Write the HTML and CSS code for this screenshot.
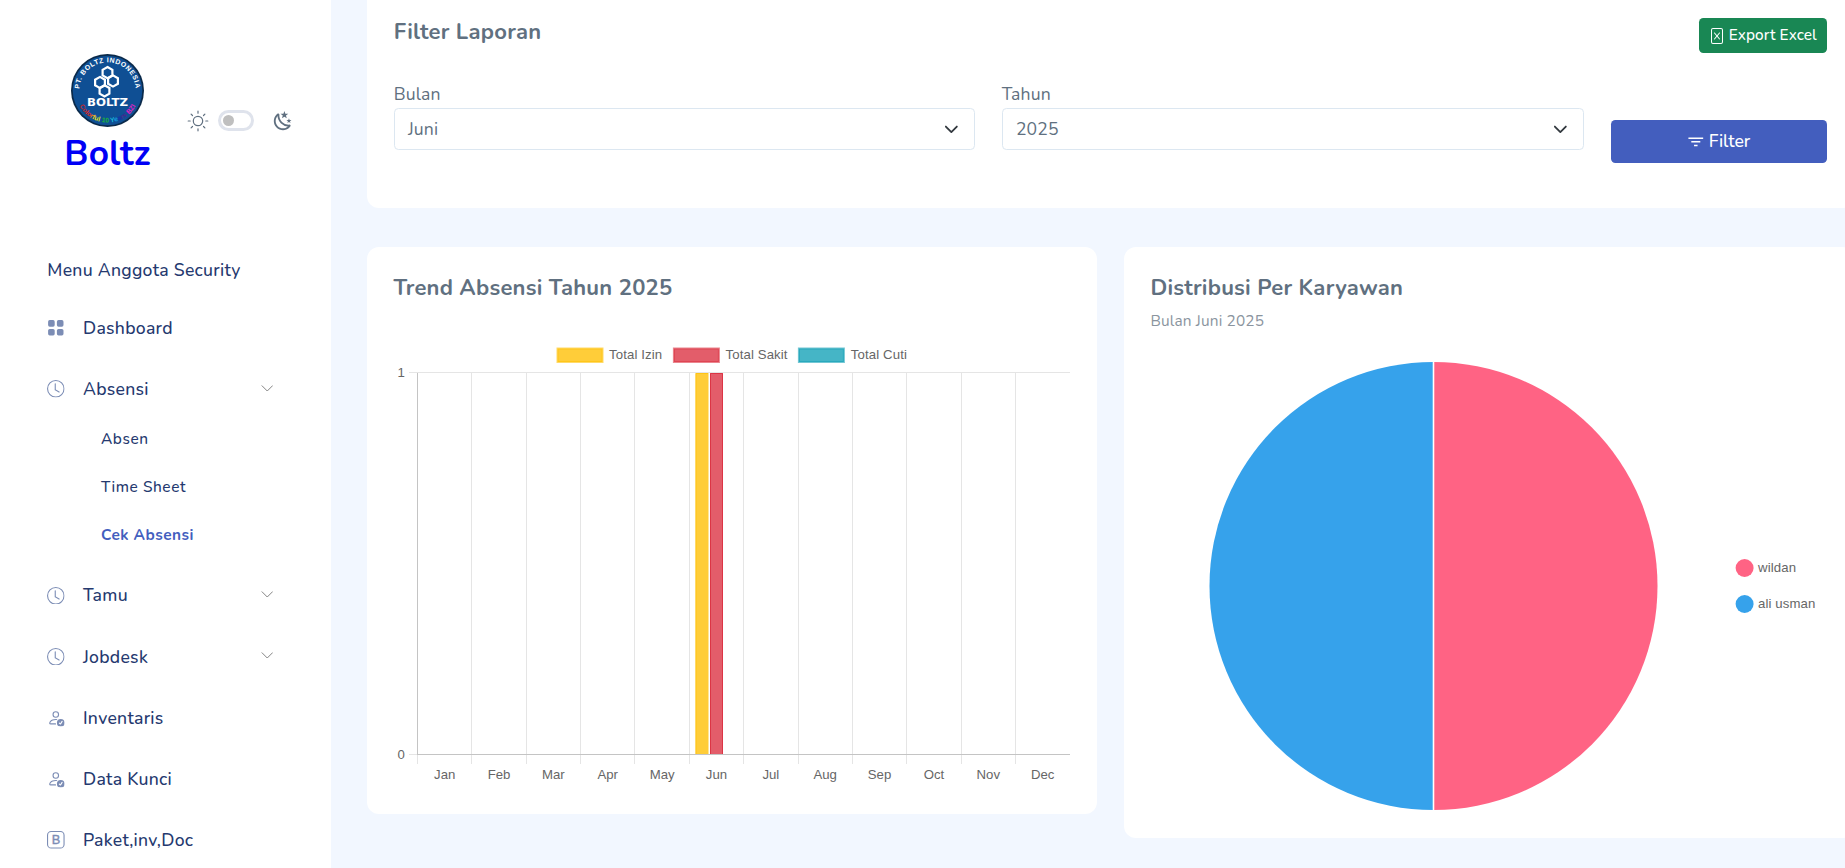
FILE: index.html
```html
<!DOCTYPE html>
<html lang="id">
<head>
<meta charset="utf-8">
<title>Cek Absensi</title>
<link rel="stylesheet" href="styles.css">
</head>
<body>
<svg class="defs" aria-hidden="true">
  <symbol id="clock" viewBox="0 0 16 16"><path d="M8 3.500a.5.5 0 0 0-1 0V9a.5.5 0 0 0 .252.434l3.500 2a.5.5 0 0 0 .496-.868L8 8.710z"/><path d="M8 16A8 8 0 1 0 8 0a8 8 0 0 0 0 16m7-8A7 7 0 1 1 1 8a7 7 0 0 1 14 0"/></symbol>
  <symbol id="person" viewBox="0 0 16 16"><path d="M12.500 16a3.500 3.500 0 1 0 0-7 3.500 3.500 0 0 0 0 7m1.679-4.493-1.335 2.226a.75.75 0 0 1-1.174.144l-.774-.773a.5.5 0 0 1 .708-.708l.547.548 1.170-1.951a.5.5 0 1 1 .858.514M11 5a3 3 0 1 1-6 0 3 3 0 0 1 6 0M8 7a2 2 0 1 0 0-4 2 2 0 0 0 0 4"/><path d="M8.256 14a4.474 4.474 0 0 1-.229-1.004H3c.001-.246.154-.986.832-1.664C4.484 10.680 5.711 10 8 10c.26 0 .507.009.74.025.226-.341.496-.65.804-.918C9.077 9.038 8.564 9 8 9c-5 0-6 3-6 4s1 1 1 1z"/></symbol>
  <symbol id="caret" viewBox="0 0 12 7"><path d="M.5.5 6 6 11.500.5" fill="none" stroke="currentColor"/></symbol>
  <symbol id="select-caret" viewBox="0 0 16 16"><path d="m2 5 6 6 6-6" fill="none" stroke="#343a40" stroke-width="2" stroke-linecap="round" stroke-linejoin="round"/></symbol>
</svg>

<div class="app">
  <aside class="sidebar">
    <header class="brand-row">
      <a class="brand">
        <svg class="logo" viewBox="-36.500 -36.500 73 73">
          <defs>
            <path id="arc-top" d="M-27.200 7.500A28.200 28.200 0 1 1 27.200 7.500"/>
            <path id="arc-bottom" d="M-31.400 7A32.200 32.200 0 0 0 31.400 7"/>
          </defs>
          <circle r="36.500" fill="#0b2a4a"/>
          <circle r="34.800" fill="#0f4f94"/>
          <g fill="none" stroke="#fff" stroke-width="2.200">
            <path d="M0-23.500l4.900 2.800v5.600L0-12.300l-4.900-2.800v-5.600z"/>
            <path d="M-7.500-13.600l4.900 2.800v5.600l-4.900 2.800-4.900-2.800v-5.600z"/>
            <path d="M5.500-15.100l4.900 2.800v5.600L5.500-3.900.6-6.700v-5.600z"/>
            <path d="M-3-5.300l4.900 2.800v5.600L-3 5.900l-4.900-2.800v-5.600z"/>
          </g>
          <text class="logo-name" x="0" y="15.500" textLength="41" lengthAdjust="spacingAndGlyphs">BOLTZ</text>
          <text class="logo-arc logo-arc-top"><textPath href="#arc-top" startOffset="50%">PT. BOLTZ INDONESIA</textPath></text>
          <text class="logo-arc"><textPath href="#arc-bottom" startOffset="50%"><tspan fill="#c1272d">Co</tspan><tspan fill="#e0241b">lo</tspan><tspan fill="#f0701c">r</tspan><tspan fill="#f4c21a">f</tspan><tspan fill="#e5e51a">ul</tspan> <tspan fill="#19b33a">10</tspan> <tspan fill="#17b9d8">Y</tspan><tspan fill="#159be0">e</tspan><tspan fill="#1b2ba8">a</tspan><tspan fill="#4a2391">rs</tspan> <tspan fill="#e020c8">BZI</tspan></textPath></text>
        </svg>
        <span class="brand-name">Boltz</span>
      </a>
      <div class="theme">
        <svg class="sun" viewBox="0 0 22 22" fill="none" stroke="currentColor" stroke-width="1.200" stroke-linecap="round"><circle cx="11" cy="11" r="4.700"/><path d="M11 1.200v2M11 18.800v2M1.200 11h2M18.800 11h2M4.100 4.100l1.400 1.400M16.500 16.500l1.400 1.400M4.100 17.900l1.400-1.400M16.500 5.500l1.400-1.400"/></svg>
        <span class="switch"><span class="knob"></span></span>
        <svg class="moon" viewBox="0 0 24 24" fill="currentColor"><path d="m17.750 4.090-2.530 1.940.91 3.060-2.630-1.810-2.630 1.810.91-3.060-2.530-1.940L12.440 4l1.060-3 1.060 3zm3.500 6.910-1.640 1.250.59 1.980-1.700-1.170-1.700 1.170.59-1.980L15.750 11l2.060-.05L18.500 9l.69 1.950zm-2.280 4.950c.83-.08 1.720 1.100 1.190 1.850-.32.45-.66.87-1.080 1.270C15.170 23 8.840 23 4.940 19.070c-3.910-3.900-3.910-10.240 0-14.140.4-.4.82-.76 1.270-1.080.75-.53 1.930.36 1.850 1.190-.27 2.860.69 5.830 2.890 8.020a9.960 9.960 0 0 0 8.020 2.890m-1.640 2.020a12.080 12.080 0 0 1-7.800-3.470c-2.170-2.190-3.330-5-3.490-7.820-2.810 3.140-2.700 7.960.31 10.980 3.020 3.010 7.840 3.120 10.980.31"/></svg>
      </div>
    </header>
    <h6 class="menu-title">Menu Anggota Security</h6>
    <nav class="menu">
      <a class="item"><svg class="icon" viewBox="0 0 16 16"><path d="M1 2.500A1.500 1.500 0 0 1 2.500 1h3A1.500 1.500 0 0 1 7 2.500v3A1.500 1.500 0 0 1 5.500 7h-3A1.500 1.500 0 0 1 1 5.500zm8 0A1.500 1.500 0 0 1 10.500 1h3A1.500 1.500 0 0 1 15 2.500v3A1.500 1.500 0 0 1 13.500 7h-3A1.500 1.500 0 0 1 9 5.500zm-8 8A1.500 1.500 0 0 1 2.500 9h3A1.500 1.500 0 0 1 7 10.500v3A1.500 1.500 0 0 1 5.500 15h-3A1.500 1.500 0 0 1 1 13.500zm8 0A1.500 1.500 0 0 1 10.500 9h3a1.500 1.500 0 0 1 1.500 1.500v3a1.500 1.500 0 0 1-1.500 1.500h-3A1.500 1.500 0 0 1 9 13.500z"/></svg>Dashboard</a>
      <a class="item"><svg class="icon"><use href="#clock"/></svg>Absensi<svg class="caret"><use href="#caret"/></svg></a>
      <div class="submenu">
        <a class="sub">Absen</a>
        <a class="sub">Time Sheet</a>
        <a class="sub active">Cek Absensi</a>
      </div>
      <a class="item"><svg class="icon"><use href="#clock"/></svg>Tamu<svg class="caret"><use href="#caret"/></svg></a>
      <a class="item"><svg class="icon"><use href="#clock"/></svg>Jobdesk<svg class="caret"><use href="#caret"/></svg></a>
      <a class="item"><svg class="icon"><use href="#person"/></svg>Inventaris</a>
      <a class="item"><svg class="icon"><use href="#person"/></svg>Data Kunci</a>
      <a class="item"><svg class="icon" viewBox="0 0 16 16"><rect x=".5" y=".5" width="15" height="15" rx="3.300" fill="none" stroke="currentColor"/><text class="icon-b" x="8.100" y="12.100">B</text></svg>Paket,inv,Doc</a>
    </nav>
  </aside>

  <main class="main">
    <section class="card filter-card">
      <div class="card-head">
        <h4 class="title">Filter Laporan</h4>
        <button class="btn export"><svg class="export-icon" viewBox="0 0 16 16" fill="currentColor"><path d="M5.180 4.616a.5.5 0 0 1 .704.064L8 7.219l2.116-2.540a.5.5 0 1 1 .768.641L8.650 8l2.233 2.680a.5.5 0 0 1-.768.640L8 8.781l-2.116 2.540a.5.5 0 0 1-.768-.641L7.349 8 5.116 5.320a.5.5 0 0 1 .064-.704"/><path d="M4 0a2 2 0 0 0-2 2v12a2 2 0 0 0 2 2h8a2 2 0 0 0 2-2V2a2 2 0 0 0-2-2zm0 1h8a1 1 0 0 1 1 1v12a1 1 0 0 1-1 1H4a1 1 0 0 1-1-1V2a1 1 0 0 1 1-1"/></svg><span class="btn-text">Export Excel</span></button>
      </div>
      <div class="filters">
        <div class="field"><label class="label">Bulan</label><div class="select">Juni<svg class="select-caret"><use href="#select-caret"/></svg></div></div>
        <div class="field"><label class="label">Tahun</label><div class="select">2025<svg class="select-caret"><use href="#select-caret"/></svg></div></div>
        <button class="btn apply"><svg class="filter-icon" viewBox="0 0 16 16" fill="none" stroke="currentColor" stroke-width="1.300"><path d="M1.300 4.700h13.400M3.900 8h8.200M6.400 11.300h3.200"/></svg><span class="btn-text">Filter</span></button>
      </div>
    </section>

    <div class="charts">
      <section class="card trend">
        <h4 class="title">Trend Absensi Tahun 2025</h4>
        <svg class="bar-chart" viewBox="394 330 676 460">
          <g stroke-width="2">
            <rect x="557.500" y="348.500" width="45" height="13.500" fill="#ffcd39" stroke="#ffc107" stroke-opacity=".6"/>
            <rect x="673.900" y="348.500" width="45" height="13.500" fill="#e35d6a" stroke="#dc3545" stroke-opacity=".6"/>
            <rect x="798.900" y="348.500" width="45" height="13.500" fill="#45b5c6" stroke="#17a2b8" stroke-opacity=".6"/>
          </g>
          <g class="tick legend">
            <text x="609" y="358.600">Total Izin</text><text x="725.500" y="358.600">Total Sakit</text><text x="850.800" y="358.600">Total Cuti</text>
          </g>
          <g id="bar-grid" stroke="#e5e5e5"></g>
          <path d="M417.500 373V754" stroke="#c4c4c4"/>
          <rect x="695.500" y="373" width="13" height="382" fill="#ffcd39"/><path d="M696 755V373.500H708" fill="none" stroke="#ffc107" stroke-opacity=".7"/>
          <rect x="710" y="373" width="13" height="382" fill="#e35d6a"/><path d="M710.500 755V373.500H722.500V755" fill="none" stroke="#dc3545"/>
          <path d="M417 754.500H1070" stroke="#c4c4c4"/>
          <g class="tick" id="bar-labels"><text x="397.500" y="377">1</text><text x="397.500" y="759">0</text></g>
        </svg>
      </section>
      <section class="card share">
        <h4 class="title">Distribusi Per Karyawan</h4>
        <p class="subtitle">Bulan Juni 2025</p>
        <svg class="pie-chart" viewBox="1151 340 676 480">
          <path d="M1433.500 362a224 224 0 0 1 0 448z" fill="#ff6384"/>
          <path d="M1433.500 362a224 224 0 0 0 0 448z" fill="#36a2eb"/>
          <path d="M1433.500 361V811" stroke="#fff" stroke-width="1.600"/>
          <circle cx="1744.600" cy="568" r="9" fill="#ff6384"/><circle cx="1744.600" cy="604" r="9" fill="#36a2eb"/>
          <g class="tick legend"><text x="1758" y="571.700">wildan</text><text x="1758" y="607.700">ali usman</text></g>
        </svg>
      </section>
    </div>
  </main>
</div>
<script src="chart.js"></script>
</body>
</html>
```
FILE: styles.css
```css
* { box-sizing: border-box; }
body { margin: 0; height: 868px; overflow: hidden; background: #f2f7ff; color: #607080; font-family: "Nunito", "Lato", sans-serif; font-size: 17.6px; }
h4, h6, p { margin: 0; }
svg { display: block; flex: none; }
.defs { position: absolute; width: 0; height: 0; }
.app { display: flex; height: 868px; }

.sidebar { flex: none; width: 331px; height: 868px; padding-top: 54px; background: #fff; overflow: hidden; }
.brand-row { display: flex; align-items: center; height: 133px; padding-left: 63.500px; }
.brand { display: flex; flex-direction: column; align-items: center; align-self: flex-start; width: 88px; }
.logo { width: 73px; height: 73px; }
.logo-name { font: 700 11.300px "DejaVu Sans", sans-serif; fill: #fff; text-anchor: middle; }
.logo-arc { font: 700 6.800px "Liberation Sans", sans-serif; text-anchor: middle; }
.logo-arc-top { fill: #fff; font-size: 6.900px; letter-spacing: .55px; }
.brand-name { height: 60px; line-height: 53px; font-size: 35.200px; font-weight: 700; letter-spacing: .2px; color: #0000f5; white-space: nowrap; }
.theme { display: flex; align-items: center; margin-left: 35.800px; }
.sun { width: 22px; height: 22px; }
.switch { display: flex; align-items: center; width: 36px; height: 21px; margin-left: 8.700px; padding-left: 2px; border: 3px solid #dfe3ec; border-radius: 11px; }
.knob { width: 11px; height: 11px; border-radius: 50%; background: #bfbfbf; }
.moon { width: 22px; height: 22px; margin-left: 18.200px; }

.menu-title { height: 50px; margin: 58px 0 2.500px 47.300px; line-height: 50px; font-size: 17.600px; font-weight: 500; letter-spacing: .28px; color: #25396f; }
.item { display: flex; align-items: center; height: 61.200px; padding: 0 58px 0 47.300px; font-weight: 500; letter-spacing: .28px; color: #25396f; }
.icon { width: 17.600px; height: 17.600px; margin-right: 18.100px; fill: currentColor; color: #7c8db5; }
.icon-b { font: 11.600px "Liberation Sans", sans-serif; stroke: currentColor; stroke-width: .35px; letter-spacing: 0; text-anchor: middle; }
.caret { width: 12.500px; height: 7px; margin: -2px 0 0 auto; color: #858585; }
.submenu { height: 145px; margin-top: -5px; margin-bottom: 5px; }
.sub { display: flex; align-items: center; height: 48px; padding-left: 101px; font-size: 15.400px; font-weight: 550; letter-spacing: .58px; color: #25396f; }
.sub.active { font-weight: 700; letter-spacing: .48px; color: #435ebe; }

.main { flex: none; width: 1524px; padding-left: 36px; }
.card { background: #fff; border-radius: 12px; }
.title { height: 28px; line-height: 29px; font-size: 22px; font-weight: 700; letter-spacing: .25px; }
.filter-card { width: 1487.500px; height: 208px; padding: 18px 27.500px 0 26.700px; border-radius: 0 0 12px 12px; }
.card-head { display: flex; justify-content: space-between; align-items: flex-start; }
.btn { display: flex; align-items: center; justify-content: center; border: 0; border-radius: 4.400px; color: #fff; font-family: inherit; font-weight: 500; padding: 0; }
.btn-text { margin-top: -2px; }
.export { width: 128px; height: 35px; background: #198754; font-size: 15.400px; letter-spacing: .08px; }
.export-icon { width: 16px; height: 16px; margin: 1px 3.500px 0 0; }
.filters { display: grid; grid-template-columns: 581px 582px 216px; gap: 27px; margin-top: 28px; }
.label { display: block; height: 27px; line-height: 26.400px; letter-spacing: .15px; }
.select { display: flex; align-items: center; justify-content: space-between; height: 42px; padding: 0 15px 0 13.200px; border: 1px solid #dce7f1; border-radius: 4.400px; letter-spacing: .15px; }
.select-caret { width: 14.700px; height: 14.700px; }
.apply { height: 43px; margin-top: 39px; background: #435ebe; font-size: 17.600px; }
.filter-icon { width: 17.600px; height: 17.600px; margin: 1px 4px 0 0; }

.charts { display: flex; align-items: flex-start; gap: 27px; margin-top: 39px; }
.trend { width: 730px; height: 567px; padding: 27px 27px 0 26.500px; }
.share { width: 730px; height: 591px; padding: 27px 26.500px 0; }
.bar-chart { width: 676px; height: 460px; margin: 28px 0 0 .5px; }
.subtitle { height: 24px; margin-top: 7px; line-height: 24px; font-size: 15.400px; letter-spacing: .15px; color: #8a949e; }
.pie-chart { width: 676px; height: 480px; margin: 7px 0 0 .5px; }
.tick { font: 13.200px "Liberation Sans", Arial, sans-serif; fill: #666; }
.legend { letter-spacing: .12px; }
.tick .month { text-anchor: middle; }
```
FILE: chart.js
```js
const months = ["Jan", "Feb", "Mar", "Apr", "May", "Jun", "Jul", "Aug", "Sep", "Oct", "Nov", "Dec"];
const left = 417.5, step = 54.36;
let lines = '<path d="M409 372.5H1070M409 754.5H417M417.5 754V764"/>';
let labels = "";
months.forEach((month, i) => {
  if (i > 0) lines += `<path d="M${Math.floor(left + i * step) + 0.5} 373V764"/>`;
  labels += `<text class="month" x="${left + (i + 0.5) * step}" y="779">${month}</text>`;
});
document.getElementById("bar-grid").innerHTML = lines;
document.getElementById("bar-labels").insertAdjacentHTML("beforeend", labels);
```
